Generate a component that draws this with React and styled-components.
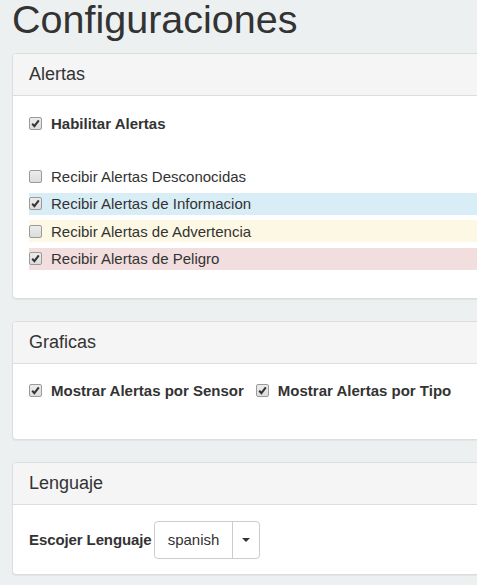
import styled, { createGlobalStyle } from "styled-components";

const GlobalStyle = createGlobalStyle`
    body {
        margin: 0;
        background: #ecf0f1;
        font-family: "Liberation Sans", Arial, sans-serif;
        color: #333;
        overflow: hidden;
    }
`;

const Page = styled.div`
    width: 540px;
    padding: 0 12px;
`;

const Title = styled.h1`
    margin: 0 0 14px;
    font-size: 39.5px;
    line-height: 39px;
    font-weight: 400;
    color: #333;
`;

const Panel = styled.section`
    background: #fff;
    border: 1px solid #ddd;
    border-radius: 4px;
    box-shadow: 0 1px 1px rgba(0, 0, 0, 0.05);
    margin-bottom: 22px;
`;

const PanelHeading = styled.div`
    background: #f5f5f5;
    border-bottom: 1px solid #ddd;
    border-radius: 3px 3px 0 0;
    padding: 10px 16px;
    font-size: 18px;
    line-height: 21px;
`;

const PanelBody = styled.div`
    padding: ${(p) => p.$pad || "16px"};
`;

const Row = styled.label`
    display: flex;
    align-items: center;
    height: 22px;
    font-size: 15px;
    font-weight: ${(p) => (p.$bold ? 700 : 400)};
    background: ${(p) => p.$bg || "transparent"};
    margin-bottom: ${(p) => p.$gap || "0"};
`;

const Inline = styled.div`
    display: flex;
    gap: 12px;
`;

const Box = styled.span`
    width: 11px;
    height: 11px;
    border: 1px solid #9a9a9a;
    border-radius: 2px;
    background: linear-gradient(#ececec, #dcdcdc);
    margin-right: 9px;
    display: flex;
    align-items: center;
    justify-content: center;
    flex-shrink: 0;
`;

const Check = ({ on }) => (
    <Box>
        {on && (
            <svg width="9" height="9" viewBox="0 0 9 9">
                <path d="M1.2 4.8 L3.4 7.2 L7.8 1.4" fill="none" stroke="#333" strokeWidth="2" />
            </svg>
        )}
    </Box>
);

const SelectRow = styled.div`
    display: flex;
    align-items: center;
    gap: 2px;
    font-size: 15px;
`;

const Label = styled.span`
    font-weight: 700;
    letter-spacing: -0.1px;
`;

const BtnGroup = styled.div`
    display: flex;
    height: 36px;
    border: 1px solid #ccc;
    border-radius: 4px;
    background: #fff;
`;

const Btn = styled.div`
    display: flex;
    align-items: center;
    justify-content: center;
    padding: ${(p) => p.$pad};
    border-left: ${(p) => (p.$split ? "1px solid #ccc" : "none")};
    font-size: 15px;
`;

const Caret = styled.span`
    width: 0;
    height: 0;
    border-left: 4px solid transparent;
    border-right: 4px solid transparent;
    border-top: 4px solid #333;
`;

const alertRows = [
    { text: "Recibir Alertas Desconocidas", on: false },
    { text: "Recibir Alertas de Informacion", on: true, bg: "#d9edf7" },
    { text: "Recibir Alertas de Advertencia", on: false, bg: "#fcf8e3" },
    { text: "Recibir Alertas de Peligro", on: true, bg: "#f2dede" },
];

const App = () => {
    return (
        <Page>
            <GlobalStyle />
            <Title>Configuraciones</Title>

            <Panel>
                <PanelHeading>Alertas</PanelHeading>
                <PanelBody $pad="16px 16px 28px">
                    <Row $bold $gap="31px">
                        <Check on />
                        Habilitar Alertas
                    </Row>
                    {alertRows.map((r, i) => (
                        <Row key={r.text} $bg={r.bg} $gap={i < 3 ? "5.5px" : "0"}>
                            <Check on={r.on} />
                            {r.text}
                        </Row>
                    ))}
                </PanelBody>
            </Panel>

            <Panel>
                <PanelHeading>Graficas</PanelHeading>
                <PanelBody $pad="16px 16px 37px">
                    <Inline>
                        <Row $bold>
                            <Check on />
                            Mostrar Alertas por Sensor
                        </Row>
                        <Row $bold>
                            <Check on />
                            Mostrar Alertas por Tipo
                        </Row>
                    </Inline>
                </PanelBody>
            </Panel>

            <Panel>
                <PanelHeading>Lenguaje</PanelHeading>
                <PanelBody $pad="16px 16px 15px">
                    <SelectRow>
                        <Label>Escojer Lenguaje</Label>
                        <BtnGroup>
                            <Btn $pad="0 13px">spanish</Btn>
                            <Btn $pad="0 9px 0 9px" $split>
                                <Caret />
                            </Btn>
                        </BtnGroup>
                    </SelectRow>
                </PanelBody>
            </Panel>
        </Page>
    );
};

export default App;
